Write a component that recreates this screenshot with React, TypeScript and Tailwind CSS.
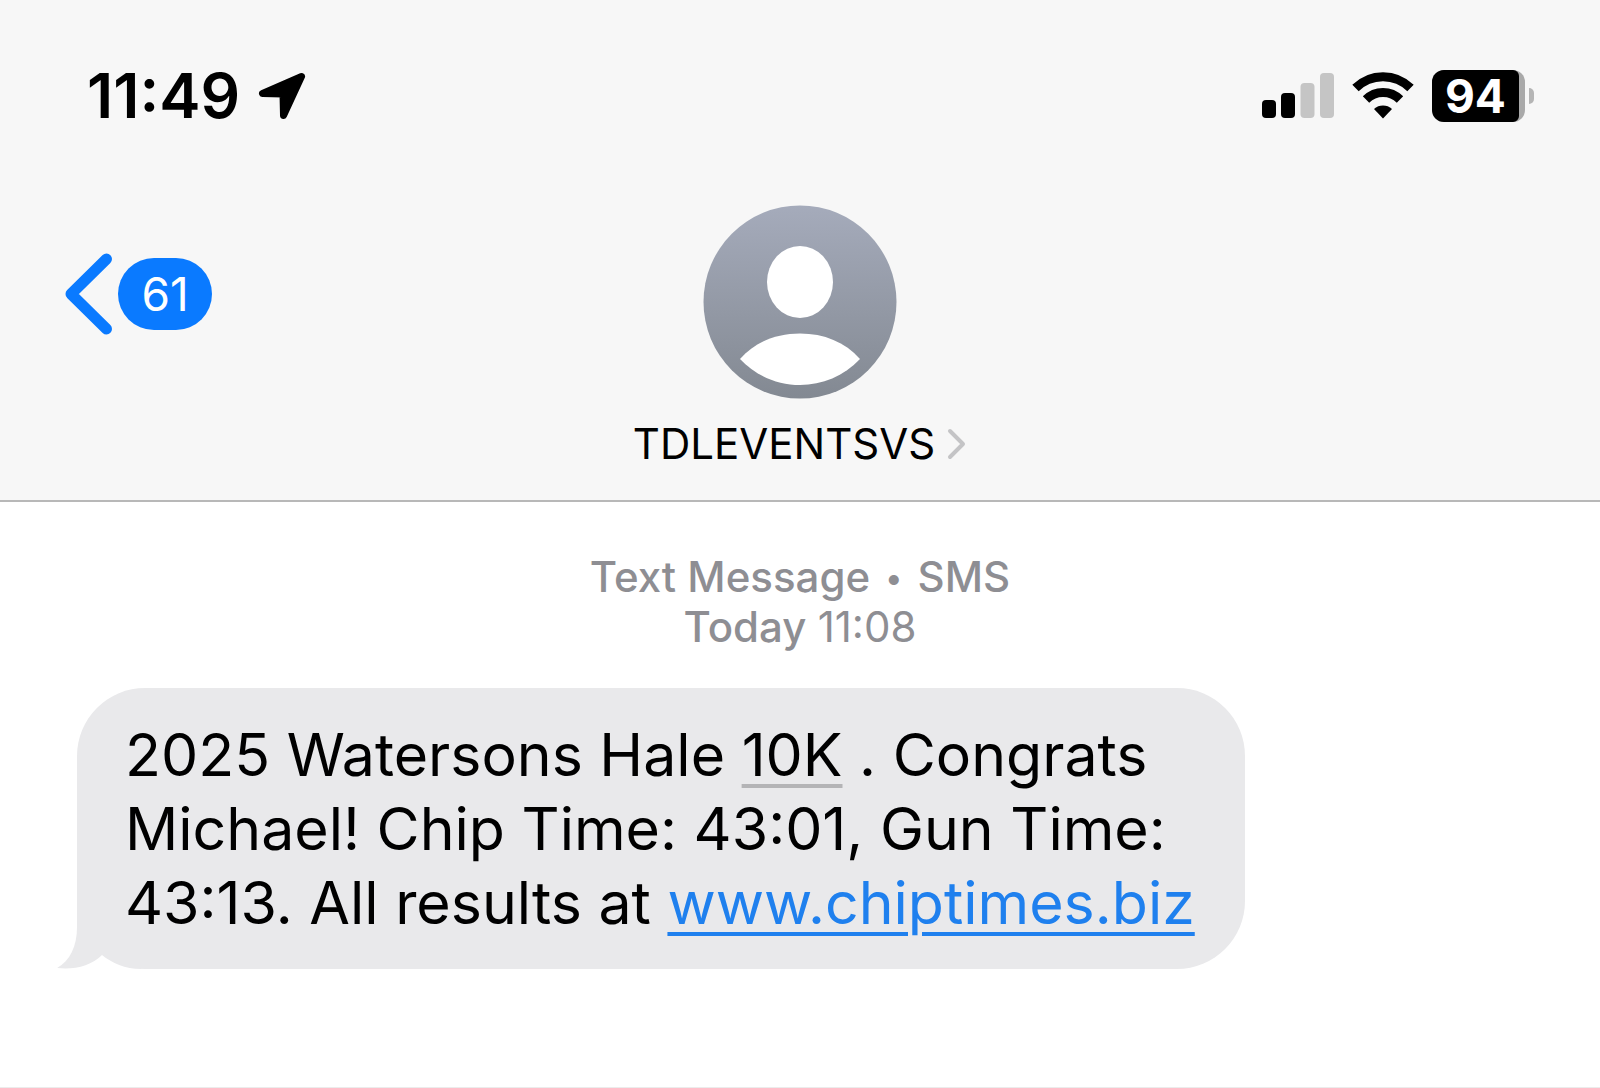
function LocationArrow() {
  return (
    <svg className="h-12 w-12" viewBox="0 0 48 48" aria-hidden="true">
      <path
        d="M43.500 4.500 L4.500 21.500 L25 22 L25.500 43.500 Z"
        fill="#000"
        stroke="#000"
        strokeWidth="7"
        strokeLinejoin="round"
      />
    </svg>
  );
}

function SignalBars() {
  return (
    <svg className="h-[46px] w-[72px]" viewBox="0 0 72 46" role="img" aria-label="Signal: 2 of 4 bars">
      <rect x="0" y="27" width="14" height="18" rx="4" fill="#000" />
      <rect x="19" y="20" width="14" height="25" rx="4" fill="#000" />
      <rect x="38.500" y="10" width="14" height="35" rx="4" fill="#c5c5c5" />
      <rect x="58" y="0" width="14" height="45" rx="4" fill="#c5c5c5" />
    </svg>
  );
}

function Wifi() {
  return (
    <svg className="h-[46px] w-[62px] overflow-visible" viewBox="0 0 62 46" role="img" aria-label="Wi-Fi">
      <path d="M3.500 15 A39 39 0 0 1 58.500 15" fill="none" stroke="#000" strokeWidth="9" />
      <path d="M14 26.500 A24 24 0 0 1 48 26.500" fill="none" stroke="#000" strokeWidth="9" />
      <path d="M31 45.500 L22 36 A13.500 13.500 0 0 1 40 36 Z" fill="#000" />
    </svg>
  );
}

function Battery() {
  return (
    <div className="flex items-center gap-1">
      <div className="rounded-xl bg-[#a9a9a9] pr-[6px]">
        <span className="flex h-[52px] w-[87px] items-center justify-center rounded-l-xl rounded-r-md bg-black text-[46px] leading-[52px] font-bold text-white">
          94
        </span>
      </div>
      <span className="h-4 w-[5px] rounded-r-full bg-[#b5b5b5]" />
    </div>
  );
}

function Avatar() {
  return (
    <svg className="h-[194px] w-[194px]" viewBox="0 0 194 194" aria-hidden="true">
      <defs>
        <linearGradient id="avatar" x1="0" y1="0" x2="0" y2="1">
          <stop offset="0" stopColor="#a5abbb" />
          <stop offset="1" stopColor="#838992" />
        </linearGradient>
      </defs>
      <circle cx="97" cy="97" r="96.500" fill="url(#avatar)" />
      <ellipse cx="97" cy="77" rx="33" ry="36" fill="#fff" />
      <path d="M37 154 C52 137 73 128.500 97 128.500 C121 128.500 142 137 157 154 C141 171 119 180 97 180 C75 180 53 171 37 154 Z" fill="#fff" />
    </svg>
  );
}

export default function App() {
  return (
    <div className="flex min-h-screen flex-col border-b border-[#ececec] bg-white font-['Inter',sans-serif] text-black">
      <header className="border-b-2 border-[#b8b8b8] bg-[#f7f7f7]">
        <div className="flex items-center justify-between pt-[60px] pr-[66px] pl-[87px]">
          <div className="flex items-center gap-[18px]">
            <time className="text-[62px] leading-[72px] font-semibold">11:49</time>
            <LocationArrow />
          </div>
          <div className="flex items-center gap-[18px]">
            <SignalBars />
            <Wifi />
            <Battery />
          </div>
        </div>

        <div className="grid grid-cols-[1fr_auto_1fr] items-start px-16 pt-[73px] pb-[31px]">
          <button type="button" aria-label="Back, 61 unread" className="mt-[47px] flex items-center gap-[6px] justify-self-start">
            <svg className="h-[84px] w-12" viewBox="0 0 48 84" aria-hidden="true">
              <path d="M42.500 7 L7 42 L42.500 77" fill="none" stroke="#0a7aff" strokeWidth="11" strokeLinecap="round" strokeLinejoin="round" />
            </svg>
            <span className="flex h-[72px] w-[94px] items-center justify-center rounded-full bg-[#0a7aff] text-[46px] text-white">
              61
            </span>
          </button>
          <button type="button" className="flex flex-col items-center gap-5">
            <Avatar />
            <span className="flex items-center gap-3 text-[42px] leading-[50px]">
              TDLEVENTSVS
              <svg className="h-8 w-5" viewBox="0 0 20 32" aria-hidden="true">
                <path d="M3 3 L16 16 L3 29" fill="none" stroke="#c4c4c6" strokeWidth="4" strokeLinecap="round" strokeLinejoin="round" />
              </svg>
            </span>
          </button>
        </div>
      </header>

      <main className="flex flex-col px-[77px] pt-[50px]">
        <p className="text-center text-[42px] leading-[50px] font-medium text-[#8e8e93]">
          Text Message <span className="mx-1 align-[3px] text-[32px] leading-none">•</span> SMS
          <br />
          Today <span className="font-normal">11:08</span>
        </p>

        <div className="relative mt-9 w-fit rounded-[68px] bg-[#e9e9eb] pt-[30px] pr-[50px] pb-[29px] pl-12">
          <svg className="absolute bottom-0 -left-5 h-[68px] w-[84px]" viewBox="0 0 84 68" aria-hidden="true">
            <path d="M20 0 H84 V68 H0 Z" fill="#e9e9eb" />
            <path d="M20 0 V26 C20 45 13 60 0 67 V0 Z" fill="#fff" />
            <path d="M45 54 C55 62 68 68 84 68 H0 V67 C17 69 34 65 45 54 Z" fill="#fff" />
          </svg>
          <p className="relative text-[59px] leading-[74px]">
            2025 Watersons Hale{" "}
            <span className="underline decoration-[#b4b4b6] decoration-4 underline-offset-8">10K</span> . Congrats
            <br />
            Michael! Chip Time: 43:01, Gun Time:
            <br />
            43:13. All results at{" "}
            <a href="http://www.chiptimes.biz" className="text-[#1f80ee] underline decoration-4 underline-offset-8">
              www.chiptimes.biz
            </a>
          </p>
        </div>
      </main>
    </div>
  );
}
